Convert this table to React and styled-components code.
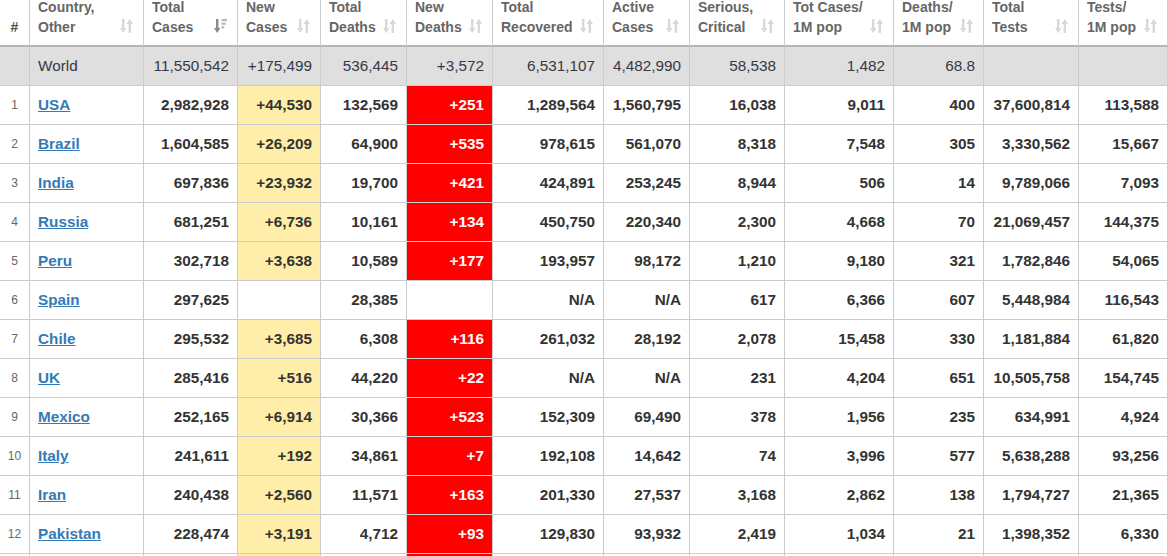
import React from 'react'
import { styled, createGlobalStyle } from 'styled-components';

const GlobalStyle = createGlobalStyle`
    html, body {
        margin: 0;
        padding: 0;
        overflow: hidden;
        background: #fff;
    }
    body {
        font-family: "Liberation Sans", Arial, sans-serif;
    }
`;

const Page = styled.div`
    width: 1168px;
    height: 556px;
    overflow: hidden;
`;

const Table = styled.table`
    width: 1168px;
    margin-top: -5px;
    table-layout: fixed;
    border-collapse: separate;
    border-spacing: 0;
    font-family: "Liberation Sans", Arial, sans-serif;
`;

const HeadCell = styled.th`
    box-sizing: border-box;
    width: ${props => props.$w}px;
    padding: 2px 10px 8px 8px;
    border-right: 1px solid #ccc;
    border-bottom: 2px solid #b4b4b4;
    background: #fff;
    color: #666;
    font-size: 14px;
    font-weight: 700;
    line-height: 20px;
    text-align: left;
    vertical-align: bottom;
    &.rank {
        padding: 0 0 8px;
        text-align: center;
        color: #555;
    }
`;

const HeadInner = styled.div`
    display: flex;
    align-items: flex-end;
    justify-content: space-between;
    span {
        white-space: pre-line;
    }
    svg {
        flex: none;
        margin-bottom: 4px;
    }
`;

const Row = styled.tr`
    td {
        height: 38px;
        background: ${props => props.$world ? '#dfdfdf' : '#fff'};
        color: ${props => props.$world ? '#363945' : '#333'};
        font-weight: ${props => props.$world ? 400 : 700};
    }
`;

const toneBg = {
    cases: '#ffeeaa',
    deaths: '#ff0000',
};

const Cell = styled.td`
    box-sizing: content-box;
    padding: 0 8px;
    border-right: 1px solid #ccc;
    border-bottom: 1px solid #ccc;
    font-size: 15.3px;
    text-align: right;
    vertical-align: middle;
    white-space: nowrap;
    overflow: hidden;
    ${Row} &&& {
        ${props => props.$tone && `background: ${toneBg[props.$tone]};`}
        ${props => props.$tone === 'deaths' && 'color: #fff;'}
    }
`;

const RankCell = styled(Cell)`
    padding: 0;
    text-align: center;
    ${Row} && {
        font-size: 12px;
        font-weight: 400;
        color: #666;
    }
`;

const NameCell = styled(Cell)`
    text-align: left;
`;

const CountryLink = styled.a`
    color: #337ab7;
    text-decoration: underline;
    font-weight: 700;
`;

const SortIcon = ({ active }) => (
    <svg width="13" height="14" viewBox="0 0 13 14">
        {active ? (
            <>
                <path d="M2 0h2.4v9H6.5l-3.3 5L0 9h2z" fill="#8a8a8a" />
                <rect x="7.5" y="0" width="5.5" height="2.2" fill="#b8b8b8" />
                <rect x="7.5" y="3.6" width="4.2" height="2.2" fill="#b8b8b8" />
                <rect x="7.5" y="7.2" width="2.8" height="2.2" fill="#b8b8b8" />
            </>
        ) : (
            <>
                <path d="M2 0h2.4v9H6.5l-3.3 5L0 9h2z" fill="#d8d8d8" />
                <path d="M8.6 14H11V5h2L9.8 0 6.5 5h2.1z" fill="#d8d8d8" />
            </>
        )}
    </svg>
);

const columns = [
    { label: '#', w: 30 },
    { label: 'Country,\nOther', w: 114 },
    { label: 'Total\nCases', w: 94, active: true },
    { label: 'New\nCases', w: 83 },
    { label: 'Total\nDeaths', w: 86 },
    { label: 'New\nDeaths', w: 86 },
    { label: 'Total\nRecovered', w: 111 },
    { label: 'Active\nCases', w: 86 },
    { label: 'Serious,\nCritical', w: 95 },
    { label: 'Tot Cases/\n1M pop', w: 109 },
    { label: 'Deaths/\n1M pop', w: 90 },
    { label: 'Total\nTests', w: 95 },
    { label: 'Tests/\n1M pop', w: 89 },
];

const world = ['World', '11,550,542', '+175,499', '536,445', '+3,572', '6,531,107', '4,482,990', '58,538', '1,482', '68.8', '', ''];

const countries = [
    ['USA', '2,982,928', '+44,530', '132,569', '+251', '1,289,564', '1,560,795', '16,038', '9,011', '400', '37,600,814', '113,588'],
    ['Brazil', '1,604,585', '+26,209', '64,900', '+535', '978,615', '561,070', '8,318', '7,548', '305', '3,330,562', '15,667'],
    ['India', '697,836', '+23,932', '19,700', '+421', '424,891', '253,245', '8,944', '506', '14', '9,789,066', '7,093'],
    ['Russia', '681,251', '+6,736', '10,161', '+134', '450,750', '220,340', '2,300', '4,668', '70', '21,069,457', '144,375'],
    ['Peru', '302,718', '+3,638', '10,589', '+177', '193,957', '98,172', '1,210', '9,180', '321', '1,782,846', '54,065'],
    ['Spain', '297,625', '', '28,385', '', 'N/A', 'N/A', '617', '6,366', '607', '5,448,984', '116,543'],
    ['Chile', '295,532', '+3,685', '6,308', '+116', '261,032', '28,192', '2,078', '15,458', '330', '1,181,884', '61,820'],
    ['UK', '285,416', '+516', '44,220', '+22', 'N/A', 'N/A', '231', '4,204', '651', '10,505,758', '154,745'],
    ['Mexico', '252,165', '+6,914', '30,366', '+523', '152,309', '69,490', '378', '1,956', '235', '634,991', '4,924'],
    ['Italy', '241,611', '+192', '34,861', '+7', '192,108', '14,642', '74', '3,996', '577', '5,638,288', '93,256'],
    ['Iran', '240,438', '+2,560', '11,571', '+163', '201,330', '27,537', '3,168', '2,862', '138', '1,794,727', '21,365'],
    ['Pakistan', '228,474', '+3,191', '4,712', '+93', '129,830', '93,932', '2,419', '1,034', '21', '1,398,352', '6,330'],
];

const toneFor = (index, value) => {
    if (!value) return undefined;
    if (index === 2) return 'cases';
    if (index === 4) return 'deaths';
    return undefined;
};

const App = () => {
    return (
        <Page>
            <GlobalStyle />
            <Table>
                <thead>
                    <tr>
                        {columns.map((col, i) => i === 0 ? (
                            <HeadCell key={col.label} $w={col.w} className="rank">{col.label}</HeadCell>
                        ) : (
                            <HeadCell key={col.label} $w={col.w}>
                                <HeadInner>
                                    <span>{col.label}</span>
                                    <SortIcon active={col.active} />
                                </HeadInner>
                            </HeadCell>
                        ))}
                    </tr>
                </thead>
                <tbody>
                    <Row $world>
                        <RankCell />
                        <NameCell>{world[0]}</NameCell>
                        {world.slice(1).map((v, i) => <Cell key={i}>{v}</Cell>)}
                    </Row>
                    {countries.map((row, r) => (
                        <Row key={row[0]}>
                            <RankCell>{r + 1}</RankCell>
                            <NameCell><CountryLink href="#">{row[0]}</CountryLink></NameCell>
                            {row.slice(1).map((v, i) => (
                                <Cell key={i} $tone={toneFor(i + 1, v)}>{v}</Cell>
                            ))}
                        </Row>
                    ))}
                    {/* next row only peeks in at the bottom edge */}
                    <Row>
                        {columns.map((col, i) => (
                            <Cell key={col.label} $tone={i === 3 ? 'cases' : i === 5 ? 'deaths' : undefined} />
                        ))}
                    </Row>
                </tbody>
            </Table>
        </Page>
    )
}

export default App
